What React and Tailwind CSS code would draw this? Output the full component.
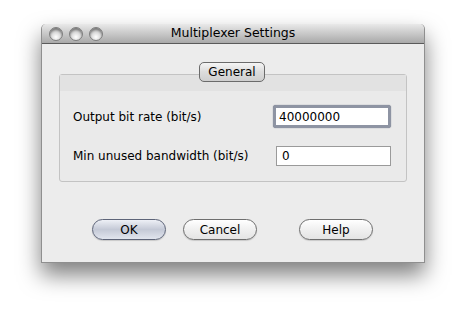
import React from 'react';

const font = { fontFamily: '"DejaVu Sans", "Liberation Sans", sans-serif' };

const Light = () => (
  <span className="w-[14px] h-[14px] rounded-full border border-[#7e7e7e] bg-[radial-gradient(circle_at_50%_75%,#ffffff_0%,#dcdcdc_40%,#949494_100%)] shadow-[inset_0_2px_2px_rgba(0,0,0,0.3)]" />
);

const Pill = ({ children, primary }) => (
  <button
    className={`w-[74px] h-[21px] rounded-full border text-[12px] text-black flex items-center justify-center leading-none ${
      primary
        ? 'border-[#5d6478] bg-gradient-to-b from-[#eef0f6] via-[#c4c9d6] to-[#e1e5ee]'
        : 'border-[#6e6e6e] bg-gradient-to-b from-[#ffffff] via-[#f0f0f0] to-[#e4e4e4]'
    } shadow-[0_1px_1px_rgba(0,0,0,0.15)]`}
  >
    {children}
  </button>
);

export default function App() {
  return (
    <div className="w-[465px] h-[317px] bg-white pt-[24px] pl-[41px]" style={font}>
      <div className="w-[384px] h-[239px] flex flex-col bg-[#ececec] border border-[#8f8f8f] border-t-0 rounded-t-[5px] shadow-[0_12px_22px_rgba(0,0,0,0.5)]">
        {/* title bar */}
        <div className="h-[20px] shrink-0 relative flex items-center justify-center rounded-t-[5px] bg-gradient-to-b from-[#e9e9e9] to-[#a9a9a9] border-b border-[#5a5a5a]">
          <div className="absolute left-[7px] top-[3px] flex gap-[6px]">
            <Light />
            <Light />
            <Light />
          </div>
          <span className="text-[12.5px] text-black">Multiplexer Settings</span>
        </div>

        {/* group */}
        <div className="px-[17px] pt-[18px] relative">
          <div className="absolute left-[157px] top-[18px] w-[66px] h-[20px] rounded-[5px] border border-[#6b6b6b] bg-gradient-to-b from-[#f5f5f5] via-[#dcdcdc] to-[#cfcfcf] flex items-center justify-center text-[12px] text-black">
            General
          </div>
          <div className="mt-[12px] h-[108px] border border-[#c3c3c3] rounded-[3px] flex flex-col bg-[#eaeaea]">
            <div className="h-[16px] bg-[#e2e2e2]" />
            <div className="flex-1 pl-[13px] pr-[15px] pt-[14px] flex flex-col gap-[18px] text-[12px] text-black">
              <div className="flex items-center justify-between">
                <span>Output bit rate (bit/s)</span>
                <div className="w-[118px] h-[23px] border-[3px] border-[#8e94a3] rounded-[3px] bg-white flex items-center pl-[3px] shadow-[0_0_1px_#5c6477]">
                  40000000
                </div>
              </div>
              <div className="flex items-center justify-between">
                <span>Min unused bandwidth (bit/s)</span>
                <div className="w-[115px] h-[20px] border border-[#9a9a9a] bg-white flex items-center pl-[5px]">
                  0
                </div>
              </div>
            </div>
          </div>
        </div>

        {/* buttons */}
        <div className="flex pl-[50px] pt-[37px]">
          <Pill primary>OK</Pill>
          <div className="ml-[17px]"><Pill>Cancel</Pill></div>
          <div className="ml-[42px]"><Pill>Help</Pill></div>
        </div>
      </div>
    </div>
  );
}
